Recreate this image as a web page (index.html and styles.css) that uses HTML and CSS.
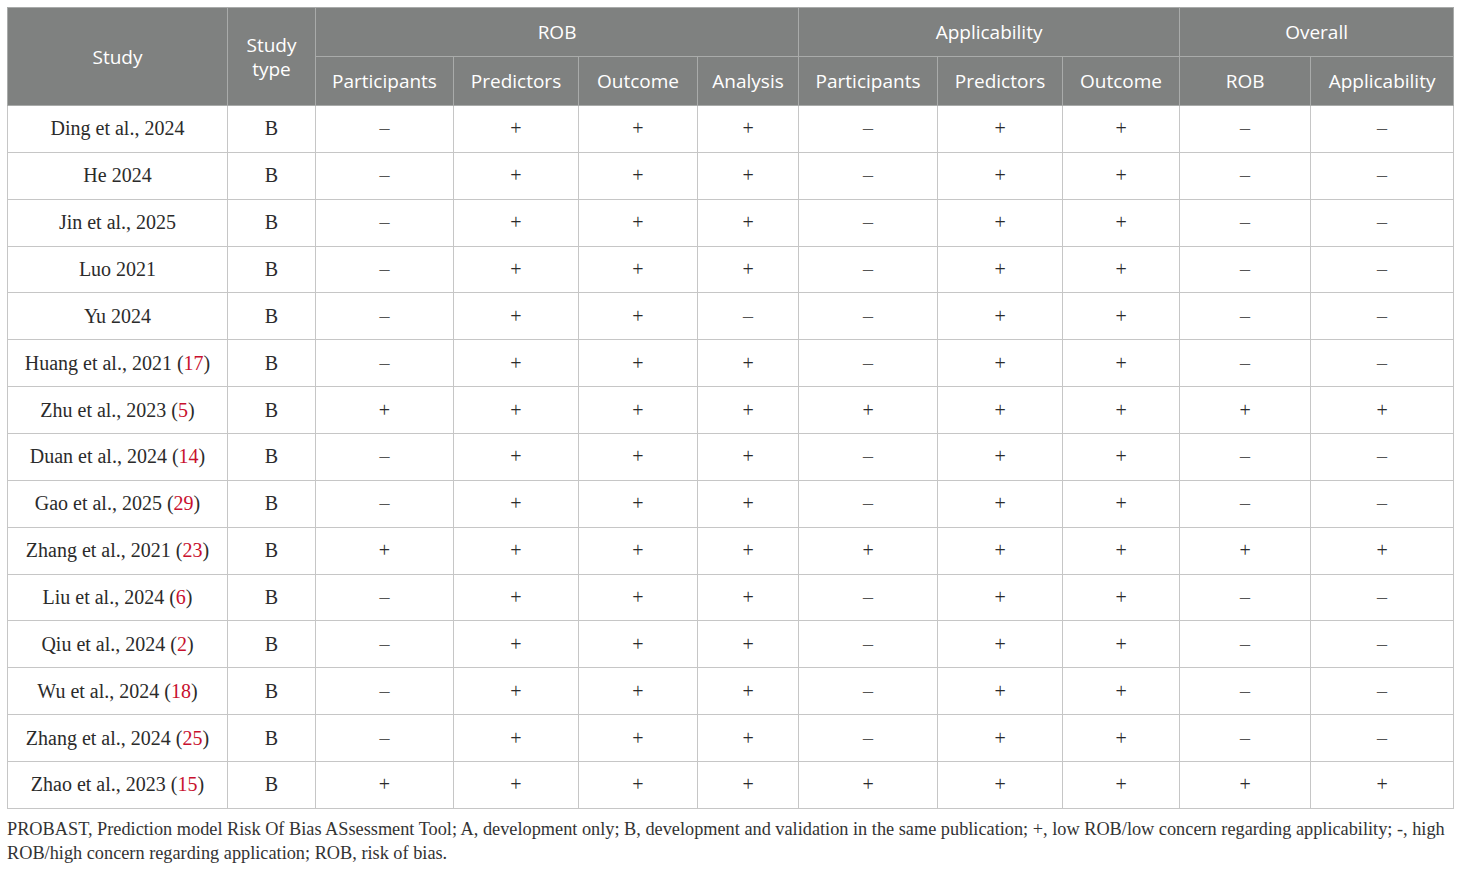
FILE: index.html
```html
<!DOCTYPE html>
<html>
<head>
<meta charset="utf-8">
<link rel="stylesheet" href="styles.css">
</head>
<body>
<div class="wrap">
<table class="rob">
<colgroup>
<col style="width:220px"><col style="width:88px"><col style="width:138px"><col style="width:125px"><col style="width:119px"><col style="width:101px"><col style="width:139px"><col style="width:125px"><col style="width:117px"><col style="width:131px"><col style="width:143px">
</colgroup>
<thead>
<tr class="h1">
<th rowspan="2">Study</th>
<th rowspan="2">Study<br>type</th>
<th colspan="4">ROB</th>
<th colspan="3">Applicability</th>
<th colspan="2">Overall</th>
</tr>
<tr class="h2">
<th>Participants</th><th>Predictors</th><th>Outcome</th><th>Analysis</th>
<th>Participants</th><th>Predictors</th><th>Outcome</th>
<th>ROB</th><th>Applicability</th>
</tr>
</thead>
<tbody id="body">
<tr><td>Ding et al., 2024</td><td>B</td><td class="m">–</td><td>+</td><td>+</td><td>+</td><td class="m">–</td><td>+</td><td>+</td><td class="m">–</td><td class="m">–</td></tr>
<tr><td>He 2024</td><td>B</td><td class="m">–</td><td>+</td><td>+</td><td>+</td><td class="m">–</td><td>+</td><td>+</td><td class="m">–</td><td class="m">–</td></tr>
<tr><td>Jin et al., 2025</td><td>B</td><td class="m">–</td><td>+</td><td>+</td><td>+</td><td class="m">–</td><td>+</td><td>+</td><td class="m">–</td><td class="m">–</td></tr>
<tr><td>Luo 2021</td><td>B</td><td class="m">–</td><td>+</td><td>+</td><td>+</td><td class="m">–</td><td>+</td><td>+</td><td class="m">–</td><td class="m">–</td></tr>
<tr><td>Yu 2024</td><td>B</td><td class="m">–</td><td>+</td><td>+</td><td class="m">–</td><td class="m">–</td><td>+</td><td>+</td><td class="m">–</td><td class="m">–</td></tr>
<tr><td>Huang et al., 2021 (<span class="ref">17</span>)</td><td>B</td><td class="m">–</td><td>+</td><td>+</td><td>+</td><td class="m">–</td><td>+</td><td>+</td><td class="m">–</td><td class="m">–</td></tr>
<tr><td>Zhu et al., 2023 (<span class="ref">5</span>)</td><td>B</td><td>+</td><td>+</td><td>+</td><td>+</td><td>+</td><td>+</td><td>+</td><td>+</td><td>+</td></tr>
<tr><td>Duan et al., 2024 (<span class="ref">14</span>)</td><td>B</td><td class="m">–</td><td>+</td><td>+</td><td>+</td><td class="m">–</td><td>+</td><td>+</td><td class="m">–</td><td class="m">–</td></tr>
<tr><td>Gao et al., 2025 (<span class="ref">29</span>)</td><td>B</td><td class="m">–</td><td>+</td><td>+</td><td>+</td><td class="m">–</td><td>+</td><td>+</td><td class="m">–</td><td class="m">–</td></tr>
<tr><td>Zhang et al., 2021 (<span class="ref">23</span>)</td><td>B</td><td>+</td><td>+</td><td>+</td><td>+</td><td>+</td><td>+</td><td>+</td><td>+</td><td>+</td></tr>
<tr><td>Liu et al., 2024 (<span class="ref">6</span>)</td><td>B</td><td class="m">–</td><td>+</td><td>+</td><td>+</td><td class="m">–</td><td>+</td><td>+</td><td class="m">–</td><td class="m">–</td></tr>
<tr><td>Qiu et al., 2024 (<span class="ref">2</span>)</td><td>B</td><td class="m">–</td><td>+</td><td>+</td><td>+</td><td class="m">–</td><td>+</td><td>+</td><td class="m">–</td><td class="m">–</td></tr>
<tr><td>Wu et al., 2024 (<span class="ref">18</span>)</td><td>B</td><td class="m">–</td><td>+</td><td>+</td><td>+</td><td class="m">–</td><td>+</td><td>+</td><td class="m">–</td><td class="m">–</td></tr>
<tr><td>Zhang et al., 2024 (<span class="ref">25</span>)</td><td>B</td><td class="m">–</td><td>+</td><td>+</td><td>+</td><td class="m">–</td><td>+</td><td>+</td><td class="m">–</td><td class="m">–</td></tr>
<tr><td>Zhao et al., 2023 (<span class="ref">15</span>)</td><td>B</td><td>+</td><td>+</td><td>+</td><td>+</td><td>+</td><td>+</td><td>+</td><td>+</td><td>+</td></tr>
</tbody>
</table>
<p class="note">PROBAST, Prediction model Risk Of Bias ASsessment Tool; A, development only; B, development and validation in the same publication; +, low ROB/low concern regarding applicability; -, high ROB/high concern regarding application; ROB, risk of bias.</p>
</div>
</body>
</html>
```
FILE: styles.css
```css
html, body {
  margin: 0;
  padding: 0;
  background: #ffffff;
}
.wrap {
  padding: 7px 7px 0 7px;
}
.rob {
  border-collapse: collapse;
  table-layout: fixed;
  width: 1446px;
}
.rob th {
  background: #7f8180;
  color: #ffffff;
  font-family: "Open Sans", "Noto Sans", sans-serif;
  font-weight: 400;
  font-size: 19px;
  line-height: 24px;
  border: 1px solid #a9abaa;
  padding: 0;
  text-align: center;
  vertical-align: middle;
}
.rob tr.h1 th, .rob tr.h2 th {
  height: 48px;
}
.rob td {
  font-family: "Liberation Serif", "Times New Roman", serif;
  font-size: 20px;
  color: #2b2b2b;
  border: 1px solid #c6c6c6;
  height: 45.87px;
  padding: 0;
  text-align: center;
  vertical-align: middle;
}
.rob td.m {
  color: #555555;
}
.ref {
  color: #c8102e;
}
.note {
  margin: 8px 0 0 0;
  font-family: "Liberation Serif", "Times New Roman", serif;
  font-size: 18.3px;
  line-height: 24px;
  color: #333333;
}
```
